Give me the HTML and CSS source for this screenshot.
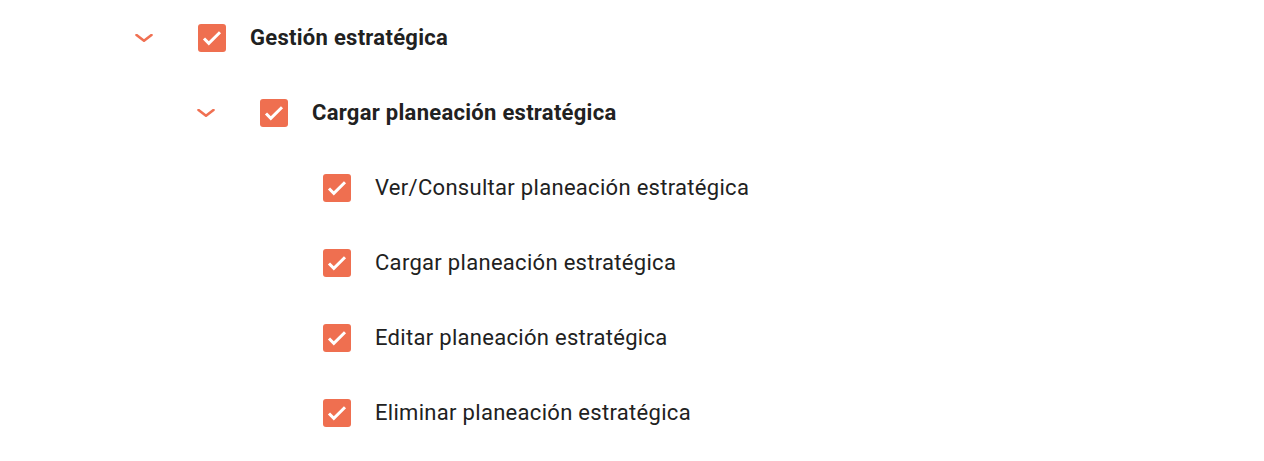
FILE: index.html
```html
<!DOCTYPE html>
<html lang="es">

<head>
    <meta charset="UTF-8">
    <meta name="viewport" content="width=device-width, initial-scale=1.0">
    <title>Permisos</title>
    <link rel="stylesheet" href="styles.css">
</head>

<body>

    <ul class="tree">
        <li class="node level-0">
            <span class="toggle">
                <svg viewBox="0 0 18 8" width="18" height="8"><path d="M1.5 1 L9 6.8 L16.5 1" /></svg>
            </span>
            <span class="check"><svg viewBox="0 0 28 28"><path d="M6 14.5 L10.8 19.3 L22 8.3" /></svg></span>
            <span class="label bold">Gestión estratégica</span>
        </li>
        <li class="node level-1">
            <span class="toggle">
                <svg viewBox="0 0 18 8" width="18" height="8"><path d="M1.5 1 L9 6.8 L16.5 1" /></svg>
            </span>
            <span class="check"><svg viewBox="0 0 28 28"><path d="M6 14.5 L10.8 19.3 L22 8.3" /></svg></span>
            <span class="label bold">Cargar planeación estratégica</span>
        </li>
        <li class="node level-2">
            <span class="toggle"></span>
            <span class="check"><svg viewBox="0 0 28 28"><path d="M6 14.5 L10.8 19.3 L22 8.3" /></svg></span>
            <span class="label">Ver/Consultar planeación estratégica</span>
        </li>
        <li class="node level-2">
            <span class="toggle"></span>
            <span class="check"><svg viewBox="0 0 28 28"><path d="M6 14.5 L10.8 19.3 L22 8.3" /></svg></span>
            <span class="label">Cargar planeación estratégica</span>
        </li>
        <li class="node level-2">
            <span class="toggle"></span>
            <span class="check"><svg viewBox="0 0 28 28"><path d="M6 14.5 L10.8 19.3 L22 8.3" /></svg></span>
            <span class="label">Editar planeación estratégica</span>
        </li>
        <li class="node level-2">
            <span class="toggle"></span>
            <span class="check"><svg viewBox="0 0 28 28"><path d="M6 14.5 L10.8 19.3 L22 8.3" /></svg></span>
            <span class="label">Eliminar planeación estratégica</span>
        </li>
    </ul>

</body>

</html>
```

FILE: styles.css
```css
body {
    font-family: Roboto, "Noto Sans", sans-serif;
    margin: 0;
    padding: 0;
    background-color: #fff;
    color: #212121;
}

.tree {
    list-style: none;
    margin: 0;
    padding: 0 0 0 135px;
}

.node {
    display: flex;
    align-items: center;
    height: 75px;
}

.level-1 {
    padding-left: 62px;
}

.level-2 {
    padding-left: 125px;
}

/* expand arrow */
.toggle {
    width: 63px;
    flex-shrink: 0;
    display: flex;
    align-items: center;
}

.toggle svg {
    display: block;
    fill: none;
    stroke: #f07052;
    stroke-width: 2.6;
    stroke-linecap: round;
    stroke-linejoin: round;
}

.check {
    width: 28px;
    height: 28px;
    flex-shrink: 0;
    background-color: #ef6f50;
    border-radius: 3px;
}

.check svg {
    display: block;
    width: 28px;
    height: 28px;
    fill: none;
    stroke: #fff;
    stroke-width: 3;
}

.label {
    margin-left: 24px;
    font-size: 22px;
    letter-spacing: 0.3px;
}

.bold {
    font-weight: 700;
    letter-spacing: 0.28px;
}
```
